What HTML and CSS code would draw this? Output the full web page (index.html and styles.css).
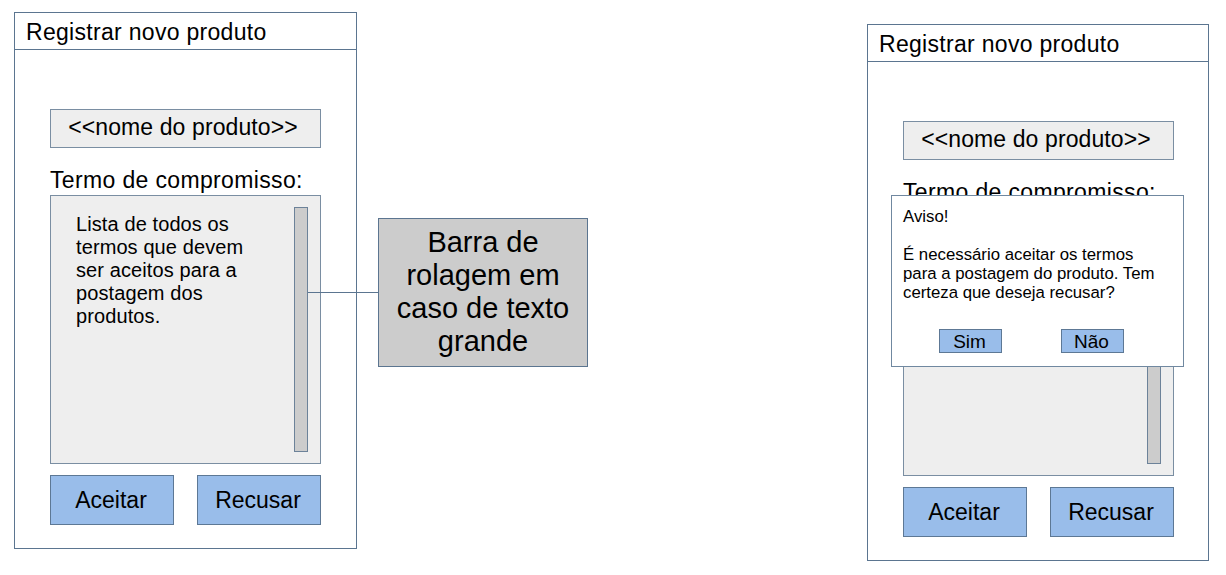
FILE: index.html
```html
<!DOCTYPE html>
<html lang="pt">
<head>
<meta charset="utf-8">
<title>Registrar novo produto</title>
<link rel="stylesheet" href="styles.css">
</head>
<body>
<div class="canvas">
  <section class="frame">
    <header class="frame-title">Registrar novo produto</header>
    <div class="frame-body">
      <div class="name-box">&lt;&lt;nome do produto&gt;&gt;</div>
      <div class="label">Termo de compromisso:</div>
      <div class="terms">
        <p class="terms-text">Lista de todos os termos que devem ser aceitos para a postagem dos produtos.</p>
        <div class="scrollbar"></div>
      </div>
      <div class="actions">
        <button class="btn">Aceitar</button>
        <button class="btn">Recusar</button>
      </div>
    </div>
  </section>

  <div class="note">Barra de<br>rolagem em<br>caso de texto<br>grande</div>
  <div class="connector"></div>

  <section class="frame frame-right">
    <header class="frame-title">Registrar novo produto</header>
    <div class="frame-body">
      <div class="name-box">&lt;&lt;nome do produto&gt;&gt;</div>
      <div class="label">Termo de compromisso:</div>
      <div class="terms">
        <div class="terms-text"></div>
        <div class="scrollbar"></div>
      </div>
      <div class="actions">
        <button class="btn">Aceitar</button>
        <button class="btn">Recusar</button>
      </div>
    </div>
    <div class="dialog">
      <p class="dialog-text">Aviso!<br><br>É necessário aceitar os termos<br>para a postagem do produto. Tem<br>certeza que deseja recusar?</p>
      <div class="dialog-actions">
        <button class="btn-small">Sim</button>
        <button class="btn-small">Não</button>
      </div>
    </div>
  </section>
</div>
</body>
</html>
```

FILE: styles.css
```css
* { box-sizing: border-box; }

html, body {
  margin: 0;
  padding: 0;
  background: #ffffff;
}

body {
  font-family: "Liberation Sans", Arial, sans-serif;
  color: #000000;
}

.canvas {
  position: relative;
  display: flex;
  align-items: flex-start;
  height: 575px;
  padding-left: 14px;
}

.frame {
  position: relative;
  width: 343px;
  height: 537px;
  margin-top: 12px;
  border: 1px solid #5b7590;
  background: #ffffff;
  display: flex;
  flex-direction: column;
}

.frame-right {
  width: 342px;
  margin-top: 24px;
  margin-left: auto;
  margin-right: 17px;
}

.frame-title {
  height: 37px;
  padding: 3px 0 0 11px;
  border-bottom: 1px solid #5b7590;
  font-size: 23px;
  line-height: 33px;
  letter-spacing: 0.3px;
  white-space: nowrap;
}

.frame-body {
  padding: 59px 0 0 35px;
  display: flex;
  flex-direction: column;
}

.name-box {
  width: 271px;
  height: 39px;
  border: 1px solid #7a8ea2;
  background: #eeeeee;
  font-size: 23px;
  line-height: 35px;
  letter-spacing: 0.1px;
  text-align: center;
  white-space: nowrap;
  padding-right: 5px;
}

.label {
  margin-top: 19px;
  height: 26px;
  font-size: 23px;
  line-height: 26px;
  letter-spacing: 0.35px;
  white-space: nowrap;
}

.terms {
  margin-top: 2px;
  width: 271px;
  height: 269px;
  border: 1px solid #7a8ea2;
  background: #eeeeee;
  display: flex;
  justify-content: space-between;
  padding: 11px 12px 11px 25px;
}

.terms-text {
  margin: 6px 0 0;
  width: 185px;
  font-size: 20px;
  line-height: 23px;
  letter-spacing: 0.1px;
}

.scrollbar {
  width: 14px;
  height: 100%;
  border: 1px solid #6c8299;
  background: #cccccc;
}

.actions {
  margin-top: 11px;
  display: flex;
  gap: 23px;
}

.btn {
  width: 124px;
  height: 50px;
  margin: 0;
  padding: 0 2px 0 0;
  border: 1px solid #5d7895;
  background: #99bdea;
  font-family: inherit;
  font-size: 23px;
  line-height: 46px;
  color: #000000;
  text-align: center;
}

.note {
  width: 210px;
  height: 149px;
  margin-left: 21px;
  margin-top: 218px;
  border: 1px solid #5b7590;
  background: #cccccc;
  font-size: 29px;
  line-height: 33px;
  text-align: center;
  padding-top: 7px;
  white-space: nowrap;
}

.connector {
  position: absolute;
  left: 308px;
  top: 292px;
  width: 70px;
  height: 1px;
  background: #5b7590;
}

.dialog {
  position: absolute;
  left: 23px;
  top: 170px;
  width: 293px;
  height: 172px;
  border: 1px solid #7088a0;
  background: #ffffff;
  padding: 11px 0 0 11px;
}

.dialog-text {
  margin: 0;
  font-size: 16.8px;
  line-height: 19px;
  white-space: nowrap;
}

.dialog-actions {
  margin-top: 27px;
  margin-left: 36px;
  display: flex;
  gap: 59px;
}

.btn-small {
  width: 63px;
  height: 24px;
  margin: 0;
  padding: 0 2px 0 0;
  border: 1px solid #5d7895;
  background: #99bdea;
  font-family: inherit;
  font-size: 19px;
  line-height: 21px;
  color: #000000;
  text-align: center;
}
```
